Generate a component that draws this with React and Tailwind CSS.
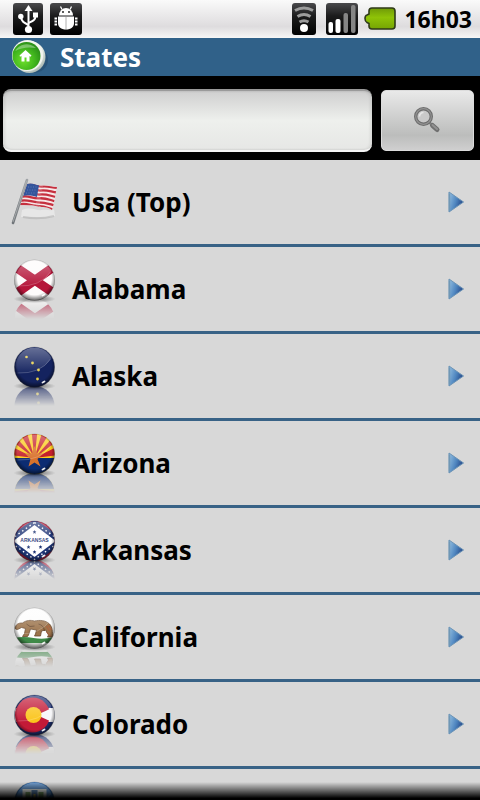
import React from "react";

function UsbIcon() {
  return (
    <svg width="30" height="32" viewBox="0 0 30 32" aria-hidden="true">
      <defs>
        <linearGradient id="tile" x1="0" y1="0" x2="0" y2="1">
          <stop offset="0" stopColor="#4a4a4c" />
          <stop offset="0.4" stopColor="#1c1c1d" />
          <stop offset="1" stopColor="#000" />
        </linearGradient>
      </defs>
      <rect width="30" height="32" rx="3" fill="url(#tile)" />
      <path d="M15.500 26V7" stroke="#fff" strokeWidth="2" />
      <path d="M15.500 2l4 6h-8z" fill="#fff" />
      <circle cx="15.500" cy="26.500" r="3.600" fill="#fff" />
      <path d="M15.500 22c-4-2-7-3-7.500-8M15.500 20c4-2 7-3 7-7" fill="none" stroke="#fff" strokeWidth="2" />
      <circle cx="7.800" cy="13.500" r="2.700" fill="#fff" />
      <rect x="20" y="9.500" width="5" height="5" fill="#fff" />
    </svg>
  );
}

function AndroidIcon() {
  return (
    <svg width="32" height="32" viewBox="0 0 32 32" aria-hidden="true">
      <rect width="32" height="32" rx="3" fill="url(#tile)" />
      <path d="M9 12.500a7 7.500 0 0 1 14 0z" fill="#fff" />
      <path d="M12 6.500L10.500 3.500M20 6.500l1.500-3" stroke="#fff" strokeWidth="1.300" />
      <circle cx="13" cy="9" r="0.900" fill="#111" />
      <circle cx="19" cy="9" r="0.900" fill="#111" />
      <path d="M8 13.500h16v6.500c0 4-3 6.500-8 6.500S8 24 8 20z" fill="#fff" />
      <path d="M16 14V26" stroke="#999" strokeWidth="0.800" />
      <path d="M7 15.500H4.500M7 18.500H4.500M7 21.500H4.500M25 15.500h2.500M25 18.500h2.500M25 21.500h2.500" stroke="#fff" strokeWidth="1.800" />
    </svg>
  );
}

function WifiIcon() {
  return (
    <svg width="24" height="32" viewBox="0 0 24 32" aria-hidden="true">
      <rect width="24" height="32" rx="3" fill="url(#tile)" />
      <g fill="none" stroke="#9c9c9c" strokeWidth="3">
        <path d="M3 7.500q9-5 18 0" />
        <path d="M5.500 13.500q6.500-4 13 0" />
        <path d="M7.500 19q4.500-2.600 9 0" />
      </g>
      <circle cx="12" cy="25" r="4" fill="#fff" />
    </svg>
  );
}

function SignalIcon() {
  return (
    <svg width="32" height="32" viewBox="0 0 32 32" aria-hidden="true">
      <rect width="32" height="32" rx="3" fill="url(#tile)" />
      <rect x="2.500" y="19" width="4.500" height="11" rx="2" fill="#fff" />
      <rect x="9.500" y="16" width="5" height="14" rx="2" fill="#fff" />
      <rect x="17.500" y="10" width="4.500" height="20" rx="2" fill="#858585" />
      <rect x="25" y="2" width="4.500" height="28" rx="2" fill="#858585" />
    </svg>
  );
}

function BatteryIcon() {
  return (
    <svg width="32" height="24" viewBox="0 0 32 24" aria-hidden="true">
      <defs>
        <linearGradient id="charge" x1="0" y1="0" x2="0" y2="1">
          <stop offset="0" stopColor="#6f9a08" />
          <stop offset="0.450" stopColor="#8fc307" />
          <stop offset="1" stopColor="#76a503" />
        </linearGradient>
      </defs>
      <path
        d="M8 1h20q3 0 3 3v15q0 3-3 3H8q-3 0-3-3v-2.500l-2-1Q1 14.500 1 11.500T3 8l2-1V4q0-3 3-3z"
        fill="url(#charge)"
        stroke="#2f3a18"
        strokeWidth="1.600"
      />
    </svg>
  );
}

function HomeIcon() {
  return (
    <svg width="38" height="38" viewBox="0 0 38 38" aria-hidden="true">
      <defs>
        <radialGradient id="homeRim" cx="0.350" cy="0.300" r="0.750">
          <stop offset="0" stopColor="#fff" />
          <stop offset="0.700" stopColor="#edf1e8" />
          <stop offset="1" stopColor="#a3b3ae" />
        </radialGradient>
        <radialGradient id="homeFace" cx="0.400" cy="0.650" r="0.650">
          <stop offset="0" stopColor="#6ee02b" />
          <stop offset="0.600" stopColor="#42b71e" />
          <stop offset="1" stopColor="#2b9118" />
        </radialGradient>
      </defs>
      <ellipse cx="23" cy="22" rx="15" ry="13" fill="#1f4566" opacity="0.500" />
      <circle cx="19.500" cy="19" r="16" fill="url(#homeRim)" />
      <circle cx="17.500" cy="17.500" r="15.500" fill="#f2f5ef" />
      <circle cx="16.500" cy="18" r="14" fill="url(#homeFace)" />
      <path d="M5 13a13 12 0 0 1 21-3q-12-2-21 3z" fill="#fff" opacity="0.350" />
      <path d="M15.500 12l6 5.500-1 1.200-1-.8v5.600h-3v-4h-2v4h-3V18l-1.500.7-.5-1.200z" fill="#fff" />
    </svg>
  );
}

function SearchIcon() {
  return (
    <svg width="28" height="28" viewBox="0 0 28 28" aria-hidden="true">
      <path d="M15 15l3 3" stroke="#8a8a8a" strokeWidth="2.500" />
      <path d="M18.500 18.500l4.500 4" stroke="#707070" strokeWidth="5" strokeLinecap="round" />
      <path d="M18.500 18l4.500 4" stroke="#929292" strokeWidth="2" strokeLinecap="round" />
      <circle cx="9.500" cy="9.500" r="7.800" fill="#c9c9c9" stroke="#6c6c6c" strokeWidth="3.400" />
      <circle cx="9.500" cy="9.500" r="7.800" fill="none" stroke="#929292" strokeWidth="1.200" />
      <path d="M5.500 9.500a4 4 0 0 1 4-4" stroke="#e5e5e5" strokeWidth="1.600" fill="none" />
    </svg>
  );
}

function ArrowIcon() {
  return (
    <svg width="16" height="22" viewBox="0 0 16 22" className="shrink-0" aria-hidden="true">
      <defs>
        <linearGradient id="arrowFill" x1="0" y1="0.200" x2="1" y2="0.600">
          <stop offset="0" stopColor="#8db9dd" />
          <stop offset="0.500" stopColor="#4f86c0" />
          <stop offset="1" stopColor="#203f80" />
        </linearGradient>
      </defs>
      <path d="M1 1L15.500 11 1 21z" fill="url(#arrowFill)" stroke="#6b93b5" strokeWidth="1" strokeLinejoin="round" />
      <path d="M1.500 2.500v17" stroke="#6f97b5" strokeWidth="1.400" />
    </svg>
  );
}

function UsaFlag() {
  return (
    <svg width="50" height="68" viewBox="0 0 50 68" className="shrink-0" aria-hidden="true">
      <defs>
        <linearGradient id="pole" x1="0" y1="0" x2="1" y2="0">
          <stop offset="0" stopColor="#6f7478" />
          <stop offset="1" stopColor="#a0a4a7" />
        </linearGradient>
        <clipPath id="usaCloth">
          <path d="M17 12c6-2 9 2 15 1.500 6-.5 9 1 15 1.500-2 8-2.500 16-5 23-5-4-9-2-14-3.500C21 32 15 34 10 33z" />
        </clipPath>
      </defs>
      <g transform="translate(0 4)">
        <path d="M12 38c9-4 14 1 20 0 5-1 10 2 12-1l1 7c-8 3-23 0-34 1z" fill="#eee" opacity="0.700" />
        <path d="M13 45q16 3 31-1" stroke="#aaa" strokeWidth="2" opacity="0.500" fill="none" />
        <g clipPath="url(#usaCloth)">
          <rect width="50" height="48" fill="#f6e6e6" />
          <g fill="none" stroke="#c5303f" strokeWidth="2.300">
            <path d="M15 13c8-2 10 2 17 1.500s9 1 16 1.500" />
            <path d="M14 17c8-2 10 2 17 1.500s9 1 16 2" />
            <path d="M13 21c8-2 10 2 17 1.500s9 1 16 2.500" />
            <path d="M11 24.800c8-2 11 2 18 1.500s9 1 16 3" />
            <path d="M10 28.800c8-2 11 1.500 18 1.500s9 1 16 3" />
            <path d="M9 32.500c8-2 11 1.500 18 1.500s9 1 16 3.500" />
          </g>
          <path d="M17 11c6-1 7 1 12 2l-2 12c-5-1-8-2.500-14-1z" fill="#34559c" />
          <path d="M18 15h9M17 18h9M16 21h10" stroke="#6d88bf" strokeWidth="0.700" strokeDasharray="1 1.500" />
          <path d="M32 10q-3 12-5 27" stroke="#fff" strokeWidth="4" opacity="0.150" />
        </g>
        <path d="M17 8L3 51" stroke="url(#pole)" strokeWidth="2.600" strokeLinecap="round" />
        <path d="M16.500 9L3 50" stroke="#b4b7b9" strokeWidth="0.700" />
      </g>
    </svg>
  );
}

const starPath = "M0-1.900l.55 1.200 1.350.1-1 .95.3 1.350L0 1l-1.200.7.3-1.350-1-.95 1.350-.1z";

function Alabama() {
  return (
    <>
      <rect x="-21" y="-21" width="42" height="42" fill="#fdfbfb" />
      <path d="M-22-15L22 15M-22 16L22-15" stroke="#b5163a" strokeWidth="9" />
    </>
  );
}

function Alaska() {
  return (
    <>
      <rect x="-21" y="-21" width="42" height="42" fill="#14235f" />
      <g fill="#e6cf4a">
        <circle cx="-8" cy="-10" r="1.300" />
        <circle cx="-2" cy="-4" r="1.400" />
        <circle cx="4" cy="3" r="1.400" />
        <circle cx="3" cy="12" r="1.400" />
      </g>
    </>
  );
}

function Arizona() {
  return (
    <>
      <rect x="-21" y="-21" width="42" height="42" fill="#fbcb1c" />
      <g fill="#c4202c">
        <path d="M0 4L-24 1v-9z" />
        <path d="M0 4l-24-18v-9z" />
        <path d="M0 4l-16-27h8z" />
        <path d="M0 4l-3-27h6z" />
        <path d="M0 4l8-27h8z" />
        <path d="M0 4l24-27v9z" />
        <path d="M0 4L24-8v9z" />
      </g>
      <rect x="-21" y="4" width="42" height="18" fill="#0c2c72" />
      <path d="M0-8l2.500 7.500H9l-6 5.500 3 7.500-6-4-6 4 2-7.500-5.500-5.500h7z" fill="#d9722c" />
    </>
  );
}

function Arkansas() {
  return (
    <>
      <rect x="-21" y="-21" width="42" height="42" fill="#b42342" />
      <path d="M0-22L32 0 0 22-32 0z" fill="#1f3575" />
      <path d="M0-18.500L26 0 0 18.500-26 0z" fill="none" stroke="#fff" strokeWidth="1.400" strokeDasharray="1.500 3" />
      <path d="M0-16L21 0 0 16-21 0z" fill="#fff" />
      <text x="0" y="1" textAnchor="middle" fontFamily="Liberation Sans, sans-serif" fontWeight="700" fontSize="5" fill="#1f3575">
        ARKANSAS
      </text>
      <g fill="#1f3575">
        <path d={starPath} transform="translate(0 -9)" />
        <path d={starPath} transform="translate(-6 6)" />
        <path d={starPath} transform="translate(6 6)" />
        <path d={starPath} transform="translate(0 11)" />
      </g>
    </>
  );
}

function California() {
  return (
    <>
      <rect x="-21" y="-21" width="42" height="42" fill="#fdfdfd" />
      <path d="M-21 10q10-2 20 0t20-1v6q-20 3-40 0z" fill="#3f8a48" />
      <rect x="-21" y="15" width="42" height="7" fill="#dfe3df" />
      <path
        d="M-19-1c1-4 5-4 7-4 4-3 8-3 12-2 5-1 11-1 15 3 3 3 3 8 3 13h-5l1-2-3-5-4 1-1 5H0l1-2 1-4-6-1-2 6-1 1.500h-5l2-3 1-5-4-1-4 2c-2 0-3-1-2-2.500z"
        fill="#9c744c"
        stroke="#6a4a2f"
        strokeWidth="0.800"
      />
      <path d="M-8-4q3 4 8 2M4-4q5 1 6 7" stroke="#6c4d32" strokeWidth="1" fill="none" />
      <path d="M12-2l3 5M14-3l3 5M12 4l4 4" stroke="#bd5a3a" strokeWidth="0.800" />
    </>
  );
}

function Colorado() {
  return (
    <>
      <rect x="-21" y="-21" width="42" height="42" fill="#1c2f70" />
      <rect x="-21" y="-7" width="42" height="14" fill="#f7f7f9" />
      <circle cx="-2" cy="0" r="17.500" fill="#c31a37" />
      <path d="M2 0l20-9V9z" fill="#f7f7f9" />
      <circle cx="-1" cy="0" r="8" fill="#fbc51d" />
    </>
  );
}

function Connecticut() {
  return (
    <>
      <rect x="-21" y="-21" width="42" height="42" fill="#2a6cb4" />
      <path d="M-12-13h24v13q-1 10-12 14Q-11 10-12 0z" fill="#dfe6df" />
      <path d="M-9-10h5v10h-5zM4-10h5v10H4z" fill="#5d9148" />
      <path d="M-3-12h6v10h-6z" fill="#2c5f95" />
      <path d="M0-8v7" stroke="#c9b844" strokeWidth="2" />
    </>
  );
}

function FlagBall({ id, art: Art }) {
  return (
    <svg width="50" height="68" viewBox="0 0 50 68" className="shrink-0" aria-hidden="true">
      <defs>
        <clipPath id={`${id}-clip`}>
          <circle r="20" />
        </clipPath>
        <radialGradient id={`${id}-shade`} cx="0.500" cy="0.450" r="0.550">
          <stop offset="0.750" stopColor="#000" stopOpacity="0" />
          <stop offset="1" stopColor="#000" stopOpacity="0.600" />
        </radialGradient>
        <linearGradient id={`${id}-gloss`} x1="0" y1="0" x2="0" y2="1">
          <stop offset="0" stopColor="#fff" stopOpacity="0.350" />
          <stop offset="1" stopColor="#fff" stopOpacity="0.020" />
        </linearGradient>
        <radialGradient id={`${id}-shadow`}>
          <stop offset="0" stopColor="#000" stopOpacity="0.550" />
          <stop offset="1" stopColor="#000" stopOpacity="0" />
        </radialGradient>
        <linearGradient id={`${id}-fade`} gradientUnits="userSpaceOnUse" x1="0" y1="44" x2="0" y2="64">
          <stop offset="0" stopColor="#fff" stopOpacity="0.700" />
          <stop offset="1" stopColor="#fff" stopOpacity="0" />
        </linearGradient>
        <mask id={`${id}-mask`} maskUnits="userSpaceOnUse" x="0" y="40" width="50" height="28">
          <rect x="0" y="44" width="50" height="20" fill={`url(#${id}-fade)`} />
        </mask>
        <g id={`${id}-ball`} clipPath={`url(#${id}-clip)`}>
          <Art />
        </g>
      </defs>
      <g mask={`url(#${id}-mask)`}>
        <use href={`#${id}-ball`} transform="translate(24.500 64) scale(1 -1)" />
      </g>
      <ellipse cx="24.500" cy="44" rx="21" ry="4" fill={`url(#${id}-shadow)`} />
      <g transform="translate(24.500 25)">
        <use href={`#${id}-ball`} />
        <path d="M-19-1A19 19 0 0 1 17-9Q6 7-17 6z" fill={`url(#${id}-gloss)`} />
        <path d="M-17 6Q6 7 16-8" fill="none" stroke="#fff" strokeWidth="0.700" opacity="0.300" />
        <circle r="20.500" fill={`url(#${id}-shade)`} />
        <ellipse cx="9" cy="15" rx="2.200" ry="1" transform="rotate(-30 9 15)" fill="#fff" opacity="0.900" />
      </g>
    </svg>
  );
}

const states = [
  { name: "Usa (Top)", icon: <UsaFlag /> },
  { name: "Alabama", icon: <FlagBall id="al" art={Alabama} /> },
  { name: "Alaska", icon: <FlagBall id="ak" art={Alaska} /> },
  { name: "Arizona", icon: <FlagBall id="az" art={Arizona} /> },
  { name: "Arkansas", icon: <FlagBall id="ar" art={Arkansas} /> },
  { name: "California", icon: <FlagBall id="ca" art={California} /> },
  { name: "Colorado", icon: <FlagBall id="co" art={Colorado} /> },
];

function StatusBar() {
  return (
    <div className="flex h-[38px] shrink-0 items-center justify-between bg-linear-to-b from-[#fafafa] via-[#dedcde] via-70% to-[#f6f6f6] pr-2 pl-[13px]">
      <div className="flex items-center gap-[7px]">
        <UsbIcon />
        <AndroidIcon />
      </div>
      <div className="flex items-center">
        <div className="flex items-center gap-2.5">
          <WifiIcon />
          <SignalIcon />
        </div>
        <div className="ml-1.5 flex items-center gap-2">
          <BatteryIcon />
          <span className="text-[23px] leading-8 font-bold text-black">16h03</span>
        </div>
      </div>
    </div>
  );
}

export default function App() {
  return (
    <div className="relative flex h-screen flex-col overflow-hidden bg-[#d8d8d8] font-['Noto_Sans','Open_Sans',sans-serif]">
      <StatusBar />
      <header className="flex h-[38px] shrink-0 items-center gap-3 bg-[#306189] pl-2.5">
        <button type="button" aria-label="Home">
          <HomeIcon />
        </button>
        <h1 className="text-[26px] leading-9 font-bold text-white">States</h1>
      </header>
      <form
        className="flex shrink-0 items-center gap-[9px] bg-black pt-[13px] pr-1.5 pb-2 pl-[3px]"
        onSubmit={(e) => e.preventDefault()}
      >
        <input
          type="text"
          aria-label="Search"
          className="h-[63px] min-w-0 flex-1 rounded-lg border-t-2 border-b-2 border-t-[#9a9a9a] border-b-[#f5f5f5] bg-linear-to-b from-[#cfcfcf] via-[#eef0ed] via-50% to-[#e6e7e5] px-3 text-[24px] text-black shadow-[inset_2px_0_3px_rgba(0,0,0,0.08),inset_-2px_0_3px_rgba(0,0,0,0.08)] outline-none"
        />
        <button
          type="submit"
          aria-label="Search states"
          className="flex h-[61px] w-[93px] items-center justify-center rounded-[5px] border border-[#dcdcdc] bg-linear-to-b from-[#e9e9e9] via-[#bcbdbc] via-75% to-[#cfcfcf]"
        >
          <SearchIcon />
        </button>
      </form>
      <ul className="min-h-0 flex-1 overflow-hidden">
        {states.map((s) => (
          <li key={s.name} className="border-b-[3px] border-[#386286]">
            <a href="#" className="flex h-[84px] items-center gap-3 pr-4 pl-2.5">
              {s.icon}
              <span className="flex-1 text-[26px] leading-9 font-bold text-black">{s.name}</span>
              <ArrowIcon />
            </a>
          </li>
        ))}
        <li className="flex h-[84px] items-center pl-2.5">
          <FlagBall id="ct" art={Connecticut} />
        </li>
      </ul>
      <div className="pointer-events-none absolute inset-x-0 bottom-0 h-[18px] bg-linear-to-b from-transparent to-black to-90%" />
    </div>
  );
}
